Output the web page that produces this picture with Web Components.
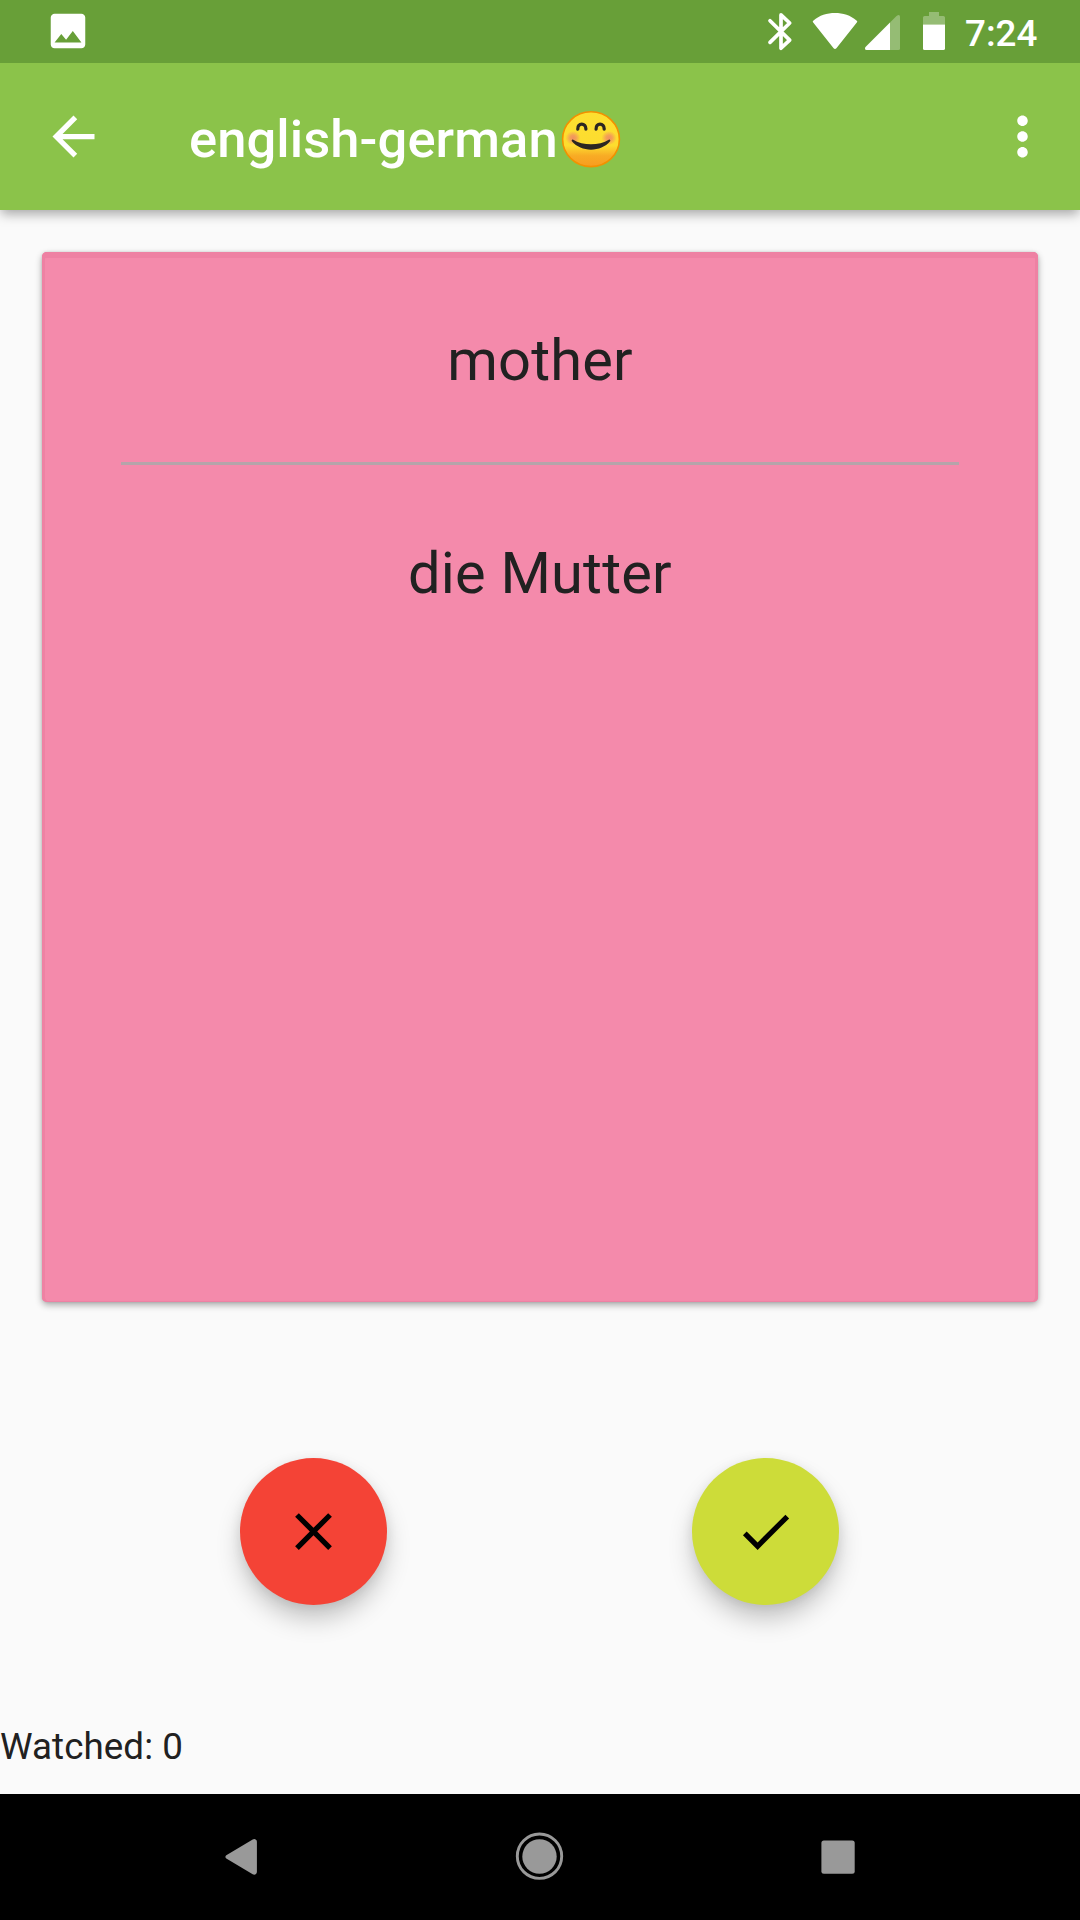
<!DOCTYPE html>
<html lang="en">
<head>
<meta charset="utf-8">
<title>english-german</title>
<style>
html,body{margin:0;padding:0}
body{width:1080px;height:1920px;overflow:hidden;background:#fafafa;font-family:Roboto,sans-serif;color:#212121}
</style>
</head>
<body>
<flash-app></flash-app>
<script>
const define = (name, html) => customElements.define(name, class extends HTMLElement {
  constructor() {
    super();
    const t = document.createElement('template');
    t.innerHTML = html;
    this.attachShadow({mode: 'open'}).append(t.content.cloneNode(true));
  }
});

define('status-bar', `
<style>
:host{display:flex;position:relative;z-index:2;box-sizing:border-box;height:63px;padding:0 41px 0 45px;background:#689f38;color:#fff;align-items:flex-start}
svg{display:block;flex:none}
.photo{margin-top:8px}
.right{display:flex;margin-left:auto}
.time{margin-left:17px;font-size:36.750px;font-weight:500;line-height:43px;padding-top:12px;height:43px;width:74px;white-space:nowrap}
</style>
<svg class="photo" width="46" height="46" viewBox="0 0 24 24"><path fill="#fff" d="M21 19V5c0-1.100-.9-2-2-2H5c-1.100 0-2 .9-2 2v14c0 1.100.9 2 2 2h14c1.100 0 2-.9 2-2zM8.500 13.500l2.500 3.010L14.500 12l4.500 6H5l3.500-4.500z"/></svg>
<div class="right">
<svg width="182" height="63" viewBox="766 0 182 63">
<path fill="none" stroke="#fff" stroke-width="3.700" stroke-linecap="round" stroke-linejoin="round" d="M770 20.800L789.700 40.100L781 48.200V14.900L789.700 23L770 42.400"/>
<path fill="#fff" d="M813.200 22.600Q812 21.500 813.500 20.400C825 10.600 845 10.600 856.500 20.400Q858 21.500 856.800 22.600L836.400 48.200Q835 49.800 833.600 48.200Z"/>
<path fill="#fff" fill-opacity=".3" d="M890 22.500L896.500 16Q898 14.900 898.700 14.900Q900 15 900 16.500V48.500Q900 50 898.500 50H890Z"/>
<path fill="#fff" d="M890 22.500V50H866.500Q864.500 50 865 48.200Q865.100 47.500 866 46.600Z"/>
<path fill="#fff" fill-opacity=".3" d="M923 24.600V17.600Q923 16 924.600 16H929V12H939V16H943.400Q945 16 945 17.600V24.600Z"/>
<path fill="#fff" d="M923 24.600H945V48.400Q945 50 943.400 50H924.600Q923 50 923 48.400Z"/>
</svg>
<div class="time"><slot></slot></div>
</div>`);

define('app-bar', `
<style>
:host{display:flex;position:relative;box-sizing:border-box;height:147px;align-items:center;padding:0 26px 0 42px;background:#8bc34a;color:#fff;box-shadow:0 5px 11px -1px rgba(0,0,0,.34)}
svg{display:block;flex:none}
h1{margin:0 0 0 84px;font-size:52.500px;line-height:62px;font-weight:500;letter-spacing:.08px;white-space:nowrap}
.title{display:flex;align-items:center;margin-right:auto;padding-top:5px}
</style>
<svg width="63" height="63" viewBox="0 0 24 24"><path fill="#fff" d="M20 11H7.830l5.590-5.590L12 4l-8 8 8 8 1.410-1.410L7.830 13H20v-2z"/></svg>
<div class="title"><h1><slot></slot></h1><slot name="emoji"></slot></div>
<svg width="63" height="63" viewBox="0 0 24 24"><path fill="#fff" d="M12 8c1.100 0 2-.9 2-2s-.9-2-2-2-2 .9-2 2 .9 2 2 2zm0 2c-1.100 0-2 .9-2 2s.9 2 2 2 2-.9 2-2-.9-2-2-2zm0 6c-1.100 0-2 .9-2 2s.9 2 2 2 2-.9 2-2-.9-2-2-2z"/></svg>`);

define('smile-emoji', `
<style>:host{display:block;width:60px;height:62px;margin-left:3px}svg{display:block}</style>
<svg width="60" height="62" viewBox="561 108 60 62" role="img" aria-label="Smiling face">
<defs>
<linearGradient id="f" x1="0" y1="0" x2="0" y2="1"><stop offset="0" stop-color="#fde030"/><stop offset=".62" stop-color="#fddc2f"/><stop offset=".8" stop-color="#f8ac25"/><stop offset="1" stop-color="#f79c1f"/></linearGradient>
<radialGradient id="c"><stop offset="0" stop-color="#ed7770" stop-opacity=".75"/><stop offset=".4" stop-color="#ed7770" stop-opacity=".6"/><stop offset="1" stop-color="#ed7770" stop-opacity="0"/></radialGradient>
</defs>
<ellipse cx="591" cy="139.200" rx="28.400" ry="27.400" fill="url(#f)" stroke="#f29100" stroke-width="1.600"/>
<ellipse cx="573" cy="138" rx="7.500" ry="7" fill="url(#c)"/><ellipse cx="609" cy="138" rx="7.500" ry="7" fill="url(#c)"/>
<path fill="none" stroke="#2b2622" stroke-width="3.300" stroke-linecap="round" d="M577.800 129C577.200 122.500 586.200 122.500 585.900 129M596.100 129C595.500 122.500 604.500 122.500 604.200 129"/>
<path fill="#2b2622" d="M572.800 139.400Q571 139.300 571.900 141.300C581 152.400 601 152.400 610.100 141.300Q611 139.300 609.200 139.400C598.500 145.900 583.500 145.900 572.800 139.400Z"/>
</svg>`);

define('flash-card', `
<style>
:host{display:flex;flex-direction:column;box-sizing:border-box;width:996px;height:1050px;margin:42px 42px 0;padding:74px 78px 0;border-radius:5px;background:#f48aab;text-align:center;font-size:57.750px;letter-spacing:.2px;line-height:68px;
box-shadow:inset 0 6px 0 #ee81a3,inset 3px 0 0 #ee81a3,inset -3px 0 0 #ee81a3,inset 0 -1px 0 #ee81a3,0 3px 7px rgba(0,0,0,.32),0 0 3px rgba(0,0,0,.12)}
hr{width:838px;height:3px;border:0;margin:68px auto 74px;background:#b5a4aa}
</style>
<div><slot name="front"></slot></div><hr><div><slot name="back"></slot></div>`);

define('fab-button', `
<style>
:host{display:flex;align-items:center;justify-content:center;width:147px;height:147px;border-radius:50%;background:var(--fab);box-shadow:0 15px 26px -2px rgba(0,0,0,.23),0 2px 12px rgba(0,0,0,.08)}
</style><slot></slot>`);

define('nav-bar', `
<style>:host{display:flex;height:126px;background:#000;align-items:center;justify-content:space-between;box-sizing:border-box;padding:0 225px}
svg{display:block}</style>
<svg width="32" height="48" viewBox="225 1833 32 48"><path fill="#999" d="M226.300 1855.300L252.700 1839.400Q254.500 1838.400 256 1839.700Q256.900 1840.400 256.900 1841.800V1871.800Q256.900 1873.200 256 1873.900Q254.500 1875.200 252.700 1874.200L226.300 1858.500Q224.500 1857 226.300 1855.300Z"/></svg>
<svg width="50" height="50" viewBox="514 1832 50 50"><circle cx="539.500" cy="1856.200" r="22.200" fill="none" stroke="#999" stroke-width="2.900"/><circle cx="539.500" cy="1856.500" r="17.200" fill="#999"/></svg>
<svg width="34" height="34" viewBox="821 1840 34 34"><rect x="821.400" y="1840.500" width="33.300" height="33.300" rx="2.500" fill="#999"/></svg>`);

define('flash-app', `
<style>
:host{display:flex;flex-direction:column;width:1080px;height:1920px}
main{flex:1;display:flex;flex-direction:column}
.actions{display:flex;margin:156px 0 0 240px;gap:305px}
.watched{margin-top:auto;padding-bottom:25px;font-size:36.750px;line-height:44px;letter-spacing:.06px}
svg{display:block}
</style>
<status-bar>7:24</status-bar>
<app-bar>english-german<smile-emoji slot="emoji"></smile-emoji></app-bar>
<main>
<flash-card><span slot="front">mother</span><span slot="back">die Mutter</span></flash-card>
<div class="actions">
<fab-button style="--fab:#f44336"><svg width="63" height="63" viewBox="0 0 24 24"><path d="M19 6.410L17.590 5 12 10.590 6.410 5 5 6.410 10.590 12 5 17.590 6.410 19 12 13.410 17.590 19 19 17.590 13.410 12z"/></svg></fab-button>
<fab-button style="--fab:#cddc39"><svg width="63" height="63" viewBox="0 0 24 24"><path d="M9 16.170L4.830 12l-1.420 1.410L9 19 21 7l-1.410-1.410z"/></svg></fab-button>
</div>
<div class="watched">Watched: 0</div>
</main>
<nav-bar></nav-bar>`);
</script>
</body>
</html>
